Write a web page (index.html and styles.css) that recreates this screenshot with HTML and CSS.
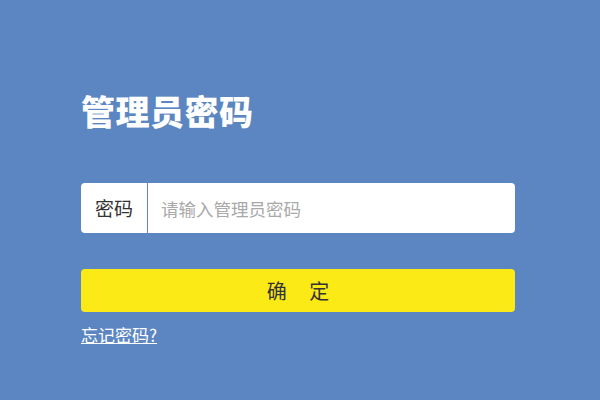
FILE: index.html
```html
<!DOCTYPE html>
<html>
<head>
<meta charset="utf-8">
<link rel="stylesheet" href="styles.css">
</head>
<body>
<div class="page">
  <h1 class="title">管理员密码</h1>
  <div class="field">
    <span class="label">密码</span>
    <input class="input" type="password" placeholder="请输入管理员密码">
  </div>
  <button class="btn">确&nbsp;&nbsp;&nbsp;&nbsp;&nbsp;定</button>
  <a class="forgot" href="#">忘记密码?</a>
</div>
</body>
</html>
```
FILE: styles.css
```css
html, body {
  margin: 0;
  padding: 0;
  width: 600px;
  height: 400px;
  background: #5c86c1;
  overflow: hidden;
  font-family: "Noto Sans CJK SC", "Microsoft YaHei", sans-serif;
}
.page {
  width: 434px;
  padding: 88px 0 0 81px;
  display: flex;
  flex-direction: column;
  align-items: flex-start;
}
.title {
  margin: 0;
  color: #fff;
  font-size: 34px;
  font-weight: 900;
  line-height: 46px;
  letter-spacing: 0.5px;
}
.field {
  margin-top: 49px;
  width: 434px;
  height: 50px;
  background: #fff;
  border-radius: 4px;
  display: flex;
  align-items: center;
  box-sizing: border-box;
}
.label {
  width: 67px;
  height: 50px;
  line-height: 50px;
  border-right: 1px solid #5c86c1;
  box-sizing: border-box;
  padding-left: 14px;
  font-size: 19px;
  color: #333;
}
.input {
  flex: 1;
  height: 48px;
  border: none;
  outline: none;
  background: transparent;
  padding: 0 0 0 13px;
  font-family: inherit;
  font-size: 17.5px;
  color: #333;
}
.input::placeholder {
  color: #a9a9a9;
}
.btn {
  margin-top: 36px;
  width: 434px;
  height: 43px;
  border: none;
  border-radius: 4px;
  background: #fcea17;
  font-family: inherit;
  font-size: 20px;
  color: #333;
  padding: 0;
}
.forgot {
  margin-top: 11px;
  color: #fff;
  font-size: 17px;
  line-height: 24px;
  text-decoration: underline;
}
```
